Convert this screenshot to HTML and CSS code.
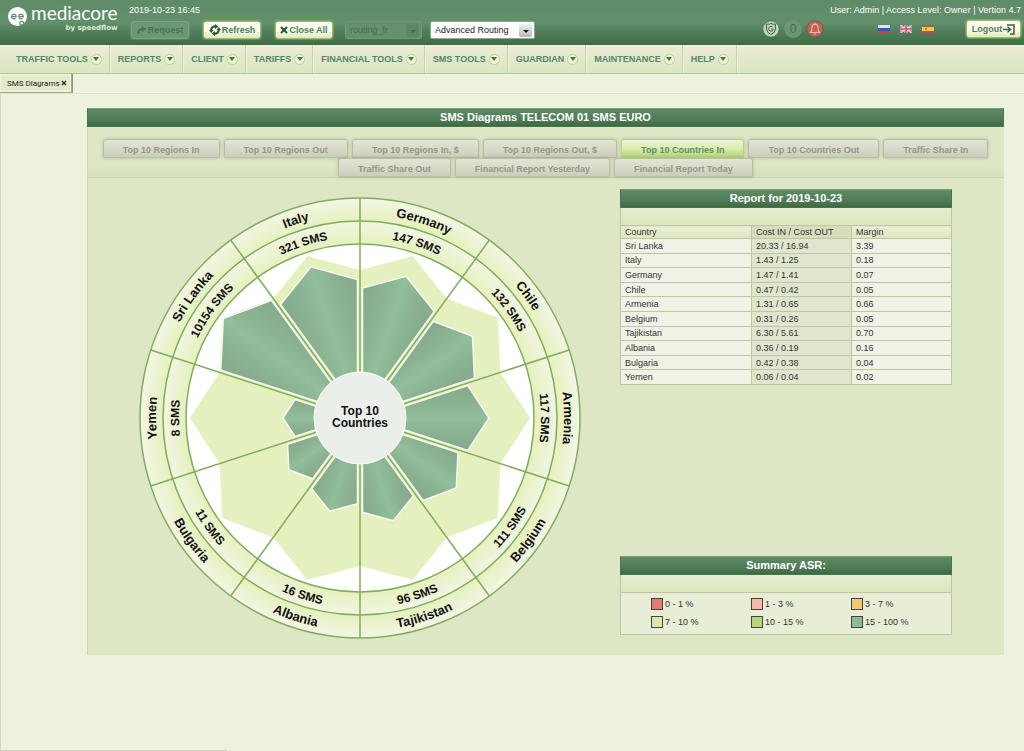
FILE: index.html
```html
<!DOCTYPE html>
<html lang="en">
<head>
    <meta charset="UTF-8">
    <meta name="viewport" content="width=device-width, initial-scale=1.0">
    <title>SMS Diagrams</title>
    <link rel="stylesheet" href="styles.css">
</head>
<body>
<header class="header">
    <a class="logo" href="#">
        <svg class="logo-mark" viewBox="0 0 20 20" width="20" height="20">
            <circle cx="9.5" cy="9.5" r="9.5" fill="#fff"/>
            <g fill="none" stroke="#5d8b67" stroke-width="1.2">
                <path d="M4 9.6h4.2a2.3 2.3 0 1 0-.7 1.7"/>
                <path d="M11 9.6h4.4a2.3 2.3 0 1 0-.7 1.7"/>
                <circle cx="13.8" cy="16.2" r="1.9" fill="#fff"/>
            </g>
        </svg>
        <span class="logo-text">
            <span class="logo-name">mediacore</span>
            <span class="logo-sub">by speedflow</span>
        </span>
    </a>
    <div class="header-left">
        <div class="date">2019-10-23 16:45</div>
        <div class="controls">
            <div class="buttons">
                <button class="btn btn-off" disabled>
                    <svg viewBox="0 0 10 10" width="10" height="10"><path d="M1.5 9V6.5q0-2.5 3.5-2.5" fill="none" stroke="currentColor" stroke-width="2"/><path d="M5 1l4.5 3L5 7z" fill="currentColor"/></svg>Request
                </button>
                <button class="btn">
                    <svg viewBox="0 0 12 12" width="12" height="12"><g fill="none" stroke="#2f5a3b" stroke-width="2.2"><path d="M2.200 7V6a3.800 3.800 0 0 1 4.500-3.600"/><path d="M9.800 5v1a3.800 3.800 0 0 1-4.500 3.600"/></g><path d="M6 0l3.500 2.500L6 5zM6 7v5L2.500 9.500zM0 6h4.500L2.200 9zM7.500 6l2.300-3L12 6z" fill="#2f5a3b"/></svg>Refresh
                </button>
                <button class="btn">
                    <svg viewBox="0 0 8 8" width="8" height="8"><path d="M1 1l6 6M7 1L1 7" stroke="#2f4f3a" stroke-width="2"/></svg>Close All
                </button>
            </div>
            <div class="selects">
                <div class="select select-off">
                    <select aria-label="Routing server" disabled><option>routing_fr</option></select>
                    <span class="arrow"></span>
                </div>
                <div class="select select-wide">
                    <select aria-label="Routing mode"><option>Advanced Routing</option></select>
                    <span class="arrow"></span>
                </div>
            </div>
        </div>
    </div>
    <div class="header-right">
        <div class="user">User: Admin | Access Level: Owner | Vertion 4.7</div>
        <div class="tools">
            <div class="badges">
                <svg viewBox="0 0 18 18" width="18" height="18">
                    <circle cx="9" cy="9" r="8.300" fill="#c3d3bb" stroke="#44704d"/>
                    <path d="M9 3.200l1.500 1 3-.2v5q-.5 4-4.500 5.500-4-1.500-4.500-5.500V4l3 .2z" fill="none" stroke="#3c6547"/>
                    <path d="M11 7.400a2.400 2.400 0 1 0 .4 1.800H9.300" fill="none" stroke="#3c6547"/>
                </svg>
                <span class="count">0</span>
                <svg viewBox="0 0 18 18" width="18" height="18">
                    <circle cx="9" cy="9" r="8.300" fill="#c5615a" stroke="#4f6a4c"/>
                    <path d="M4.500 12.500q1.500-1.500 1.500-5Q6 4.500 9 4.200q3 .3 3 3.300 0 3.500 1.500 5zM9 2.800v1.400M8 14h2" fill="none" stroke="#eab5a2" stroke-width="1.200"/>
                </svg>
            </div>
            <div class="flags">
                <a href="#" aria-label="Russian"><svg viewBox="0 0 12 8" width="12" height="8"><path fill="#e4e9e6" d="M0 0h12v3H0z"/><path fill="#3c55ad" d="M0 3h12v3H0z"/><path fill="#c7444c" d="M0 6h12v2H0z"/></svg></a>
                <a href="#" aria-label="English"><svg viewBox="0 0 12 8" width="12" height="8"><path fill="#4a5fa8" d="M0 0h12v8H0z"/><path d="M0 0l12 8M12 0L0 8" stroke="#f4eeee" stroke-width="1.800"/><path d="M0 0l12 8M12 0L0 8" stroke="#d4626a" stroke-width=".6"/><path d="M6 0v8M0 4h12" stroke="#f8f4f4" stroke-width="3"/><path d="M6 0v8M0 4h12" stroke="#d24452" stroke-width="1.500"/></svg></a>
                <a href="#" aria-label="Spanish"><svg viewBox="0 0 12 8" width="12" height="8"><path fill="#c94a43" d="M0 0h12v8H0z"/><path fill="#e6cf4c" d="M0 2h12v4H0z"/><path fill="#b0793c" d="M3 3h2v2H3z"/></svg></a>
            </div>
            <button class="btn btn-logout">Logout
                <svg viewBox="0 0 12 11" width="12" height="11"><path d="M4 1h7v9H7M0 5.500h7M4.500 2.800L7.500 5.500l-3 2.700" fill="none" stroke="#3b6346" stroke-width="1.500"/></svg>
            </button>
        </div>
    </div>
</header>

<nav class="menu">
    <a href="#">TRAFFIC TOOLS<span class="drop"></span></a>
    <a href="#">REPORTS<span class="drop"></span></a>
    <a href="#">CLIENT<span class="drop"></span></a>
    <a href="#">TARIFFS<span class="drop"></span></a>
    <a href="#">FINANCIAL TOOLS<span class="drop"></span></a>
    <a href="#">SMS TOOLS<span class="drop"></span></a>
    <a href="#">GUARDIAN<span class="drop"></span></a>
    <a href="#">MAINTENANCE<span class="drop"></span></a>
    <a href="#">HELP<span class="drop"></span></a>
</nav>

<div class="windows">
    <div class="window-tab">
        <a href="#">SMS Diagrams</a>
        <button class="close" aria-label="Close tab"><svg viewBox="0 0 6 6" width="6" height="6"><path d="M1 1l4 4M5 1L1 5" stroke="#333" stroke-width="1.500"/></svg></button>
    </div>
</div>

<main class="panel">
    <h1 class="bar">SMS Diagrams TELECOM 01 SMS EURO</h1>
    <div class="tabs">
        <a href="#">Top 10 Regions In</a>
        <a href="#">Top 10 Regions Out</a>
        <a href="#">Top 10 Regions In, $</a>
        <a href="#">Top 10 Regions Out, $</a>
        <a href="#" class="active">Top 10 Countries In</a>
        <a href="#">Top 10 Countries Out</a>
        <a href="#">Traffic Share In</a>
        <a href="#">Traffic Share Out</a>
        <a href="#">Financial Report Yesterday</a>
        <a href="#">Financial Report Today</a>
    </div>

    <div class="content">
        <svg class="chart" id="chart" viewBox="-221 -221 442 442" width="442" height="442" role="img" aria-label="Top 10 Countries"></svg>

        <div class="side">
            <section class="box">
                <h2 class="bar">Report for 2019-10-23</h2>
                <div class="strip"></div>
                <table class="report">
                    <thead>
                        <tr><th class="c-name">Country</th><th class="cost">Cost IN / Cost OUT</th><th>Margin</th></tr>
                    </thead>
                    <tbody>
                        <tr><td>Sri Lanka</td><td class="cost">20.33 / 16.94</td><td>3.39</td></tr>
                        <tr><td>Italy</td><td class="cost">1.43 / 1.25</td><td>0.18</td></tr>
                        <tr><td>Germany</td><td class="cost">1.47 / 1.41</td><td>0.07</td></tr>
                        <tr><td>Chile</td><td class="cost">0.47 / 0.42</td><td>0.05</td></tr>
                        <tr><td>Armenia</td><td class="cost">1.31 / 0.65</td><td>0.66</td></tr>
                        <tr><td>Belgium</td><td class="cost">0.31 / 0.26</td><td>0.05</td></tr>
                        <tr><td>Tajikistan</td><td class="cost">6.30 / 5.61</td><td>0.70</td></tr>
                        <tr><td>Albania</td><td class="cost">0.36 / 0.19</td><td>0.16</td></tr>
                        <tr><td>Bulgaria</td><td class="cost">0.42 / 0.38</td><td>0.04</td></tr>
                        <tr><td>Yemen</td><td class="cost">0.06 / 0.04</td><td>0.02</td></tr>
                    </tbody>
                </table>
            </section>

            <section class="box">
                <h2 class="bar">Summary ASR:</h2>
                <div class="strip"></div>
                <ul class="legend">
                    <li><i class="asr-1"></i>0 - 1 %</li>
                    <li><i class="asr-3"></i>1 - 3 %</li>
                    <li><i class="asr-7"></i>3 - 7 %</li>
                    <li><i class="asr-10"></i>7 - 10 %</li>
                    <li><i class="asr-15"></i>10 - 15 %</li>
                    <li><i class="asr-100"></i>15 - 100 %</li>
                </ul>
            </section>
        </div>
    </div>
</main>
<div class="status-line"></div>

<script src="chart.js"></script>
</body>
</html>
```
FILE: styles.css
```css
* {
    box-sizing: border-box;
}
body {
    margin: 0;
    min-height: 100vh;
    background: #edf2dc;
    box-shadow: inset 1px 0 #d3dac3;
    font-family: "Liberation Sans", Arial, sans-serif;
    font-size: 9px;
    color: #333;
}
a {
    color: inherit;
    text-decoration: none;
}
svg {
    display: block;
    flex: none;
}

/* header */
.header {
    display: flex;
    height: 45px;
    padding: 4px 3px 0 8px;
    background: linear-gradient(#5f8c67, #628f6c 50%, #527f5a 70%, #3f6b45);
    color: #fff;
}
.logo {
    display: flex;
    gap: 3px;
    width: 121px;
}
.logo-mark {
    margin-top: 3px;
}
.logo-text {
    display: flex;
    flex-direction: column;
    align-items: flex-end;
    gap: 2px;
}
.logo-name {
    font-family: Lato, sans-serif;
    font-size: 19px;
    line-height: 18px;
}
.logo-sub {
    font-family: "DejaVu Sans", sans-serif;
    font-size: 7px;
    line-height: 8px;
    font-weight: bold;
    color: #dcebd8;
}
.date, .user {
    line-height: 12px;
}
.controls, .buttons, .selects, .tools, .badges, .flags {
    display: flex;
    align-items: center;
}
.controls {
    gap: 12px;
    margin: 5px 0 0 2px;
}
.buttons {
    gap: 14px;
}
.selects {
    gap: 8px;
}
.btn {
    display: flex;
    align-items: center;
    justify-content: center;
    gap: 1px;
    min-width: 58px;
    height: 18px;
    padding: 0 3px;
    border: 1px solid #9dbf6c;
    border-radius: 3px;
    background: linear-gradient(#fbfdf2, #f6f9e6 60%, #dfebba);
    box-shadow: 0 0 1px 1px rgba(150, 190, 100, 0.5);
    color: #537c5f;
    font: bold 9px "Liberation Sans", Arial, sans-serif;
    cursor: pointer;
}
.btn-off {
    border-color: #7da281;
    background: #6d9774;
    box-shadow: 0 0 1px 1px rgba(100, 145, 105, 0.6);
    color: #477552;
}
.btn-logout {
    min-width: 55px;
}
.select {
    position: relative;
    width: 77px;
}
.select-wide {
    width: 105px;
}
.select select {
    display: block;
    width: 100%;
    height: 18px;
    padding: 0 20px 0 4px;
    border: 1px solid #8bab8c;
    border-radius: 2px;
    background: #fff;
    color: #222;
    font: 9px "Liberation Sans", Arial, sans-serif;
    appearance: none;
}
.select-off select {
    border-color: #6f9976;
    background: #64906d;
    color: #426f4c;
    opacity: 1;
}
.arrow {
    position: absolute;
    top: 3px;
    right: 3px;
    width: 13px;
    height: 13px;
    border-radius: 2px;
    background: linear-gradient(#f2f2f0, #b4b8b2);
    pointer-events: none;
}
.arrow::after {
    content: "";
    position: absolute;
    top: 6px;
    left: 4px;
    border: 3px solid transparent;
    border-top-color: #222;
    border-bottom: 0;
}
.select-off .arrow {
    background: #5a8662;
}
.select-off .arrow::after {
    border-top-color: #3f6b48;
}
.header-right {
    display: flex;
    flex-direction: column;
    align-items: flex-end;
    margin-left: auto;
}
.tools {
    margin-top: 4px;
}
.badges {
    gap: 4px;
    margin-right: 54px;
}
.count {
    width: 18px;
    border-radius: 50%;
    background: #6d9774;
    color: #40704b;
    font-size: 12px;
    line-height: 18px;
    text-align: center;
}
.flags {
    gap: 10px;
    margin-right: 32px;
}

/* main menu */
.menu {
    display: flex;
    height: 29px;
    padding-left: 8px;
    border-bottom: 1px solid #abc98c;
    background: linear-gradient(#eeebd7, #dfe8c8 60%, #dbe6c2);
    color: #558764;
    font-weight: bold;
}
.menu a {
    display: flex;
    align-items: center;
    gap: 3px;
    padding: 0 7px 0 8px;
    border-right: 1px solid #bfd79b;
    box-shadow: 1px 0 #edf2dc;
    white-space: nowrap;
}
.drop {
    display: flex;
    align-items: center;
    justify-content: center;
    width: 11px;
    height: 11px;
    border: 1px solid #b9d684;
    border-radius: 50%;
    background: #eef4d6;
}
.drop::after {
    content: "";
    border: 3px solid transparent;
    border-top: 4px solid #457050;
    border-bottom: 0;
}

/* opened windows */
.windows {
    display: flex;
    height: 20px;
    border-bottom: 1px solid #dce4c8;
}
.window-tab {
    display: flex;
    align-items: center;
    padding: 0 3px 0 7px;
    border: solid #a3ab90;
    border-width: 0 1px 1px 0;
    background: #e3ebc9;
    box-shadow: inset 0 0 2px 1px #f3f6e6, 1px 0 #8d967d;
    color: #222;
    font: 8px Roboto, sans-serif;
}
.close {
    padding: 1px;
    border: 0;
    background: none;
    cursor: pointer;
}

/* panel */
.panel {
    margin: 14px 20px 20px 87px;
    background: #dde7c5;
    box-shadow: inset 1px 0 #cdd8b6;
}
.bar {
    margin: 0;
    height: 19px;
    border: 1px solid #497450;
    border-top-color: #7b9f7b;
    background: linear-gradient(#5e8a64, #4f7d57 60%, #3e6a43);
    color: #fff;
    font-size: 11px;
    line-height: 16px;
    text-align: center;
}
.tabs {
    display: flex;
    flex-wrap: wrap;
    justify-content: center;
    column-gap: 4px;
    padding: 12px 14px 0;
    border-bottom: 1px solid #c9d4b3;
    background: linear-gradient(transparent 80%, #d5dfbe);
}
.tabs a {
    height: 19px;
    padding: 0 19px;
    border: 1px solid #b9bfa5;
    border-radius: 3px 3px 0 0;
    background: linear-gradient(#e3e4d3, #d6d8c8 60%, #cbcdbb);
    box-shadow: 0 0 3px rgba(120, 130, 100, 0.5);
    color: #939787;
    font-weight: bold;
    line-height: 20px;
    white-space: nowrap;
}
.tabs .active {
    border-color: #b5d681;
    background: linear-gradient(#edf5cf, #dcebaf 50%, #b3d57a);
    color: #5a9062;
}
.content {
    display: flex;
    flex-wrap: wrap;
    justify-content: center;
    gap: 39px;
    padding: 11px 0 16px;
}
.chart {
    margin-top: 8px;
}
.chart text {
    font-weight: bold;
    fill: #111;
    text-anchor: middle;
}
.chart .country {
    font-size: 13px;
}
.chart .sms, .chart .title {
    font-size: 12px;
}
.side {
    display: flex;
    flex-direction: column;
    justify-content: space-between;
    width: 332px;
    margin-bottom: 4px;
}
.strip {
    height: 17px;
    border: solid #bcc79f;
    border-width: 0 1px;
    background: linear-gradient(#e6eccf, #dde6bd);
}
.report {
    width: 100%;
    height: 160px;
    border-collapse: collapse;
    table-layout: fixed;
    background: #f0f2e6;
}
.report th, .report td {
    padding: 0 4px;
    border: 1px solid #bcc6a3;
    font-weight: normal;
    line-height: 12px;
    text-align: left;
}
.report th {
    background: linear-gradient(#e9eed8, #dce6c0);
}
.report .c-name {
    width: 131px;
}
.report .cost {
    width: 100px;
    background: #e0e5ce;
}
.report th.cost {
    background: #d5ddbc;
}
.legend {
    display: grid;
    grid-template-columns: 100px 100px 100px;
    row-gap: 6px;
    margin: 0;
    padding: 5px 0 6px 30px;
    border: 1px solid #bcc6a3;
    background: #e8eed6;
    list-style: none;
}
.legend li {
    display: flex;
    align-items: center;
    gap: 2px;
}
.legend i {
    width: 12px;
    height: 12px;
    border: 1px solid #444;
}
.asr-1 { background: #e37c6f; }
.asr-3 { background: #f8b9ab; }
.asr-7 { background: #f4c873; }
.asr-10 { background: #dbe8ae; }
.asr-15 { background: #b9d47a; }
.asr-100 { background: #8fb993; }

.status-line {
    position: fixed;
    bottom: 0;
    left: 0;
    width: 227px;
    height: 1px;
    background: #ced5bf;
}
```
FILE: chart.js
```js
// angle = middle of the sector, size = length of its petal
const sectors = [
    {name: 'Germany', sms: 147, angle: 18, size: 149},
    {name: 'Chile', sms: 132, angle: 54, size: 139},
    {name: 'Armenia', sms: 117, angle: 90, size: 129},
    {name: 'Belgium', sms: 111, angle: 126, size: 119},
    {name: 'Tajikistan', sms: 96, angle: 162, size: 108},
    {name: 'Albania', sms: 16, angle: 198, size: 98},
    {name: 'Bulgaria', sms: 11, angle: 234, size: 88},
    {name: 'Yemen', sms: 8, angle: 270, size: 77},
    {name: 'Sri Lanka', sms: 10154, angle: 306, size: 169},
    {name: 'Italy', sms: 321, angle: 342, size: 159}
];

const SIN = Math.sin(Math.PI / 10);
const COS = Math.cos(Math.PI / 10);

// petal pointing up, inset is the distance to the sector lines
function petal(size, inset) {
    const side = size * 0.867;
    const t = inset / (size * SIN);
    const x = side * SIN * (1 - t);
    const y = -side * COS + t * (side * COS - size);
    return `0,${-inset / SIN} ${x},${y} 0,${-size} ${-x},${y}`;
}

function arc(id, r, flip) {
    return flip
        ? `<path id="${id}" d="M${-r} 0A${r} ${r} 0 0 0 ${r} 0"/>`
        : `<path id="${id}" d="M${-r} 0A${r} ${r} 0 0 1 ${r} 0"/>`;
}

function label(cls, text, path, angle) {
    return `<text class="${cls}" transform="rotate(${angle})"><textPath href="#${path}" startOffset="50%">${text}</textPath></text>`;
}

let svg = `<defs>
    <radialGradient id="ring" gradientUnits="userSpaceOnUse" cx="0" cy="0" r="220">
        <stop offset=".79" stop-color="#e5f1bc"/><stop offset=".89" stop-color="#f1f5e2"/>
        <stop offset=".895" stop-color="#e5f1bc"/><stop offset="1" stop-color="#f3f6e6"/>
    </radialGradient>
    <linearGradient id="petal">
        <stop offset="0" stop-color="#86a98a"/><stop offset=".25" stop-color="#8ab191"/>
        <stop offset=".5" stop-color="#92be9a"/>
        <stop offset=".75" stop-color="#8ab191"/><stop offset="1" stop-color="#86a98a"/>
    </linearGradient>
    ${arc('country', 204, false)}${arc('country-flip', 213, true)}
    ${arc('sms', 181, false)}${arc('sms-flip', 190, true)}
</defs>
<circle r="220" fill="url(#ring)"/>
<circle r="174" fill="#fff"/>`;

sectors.forEach(s => {
    svg += `<polygon points="${petal(170, 0)}" fill="#e5f0bf" stroke="#e5f0bf" stroke-width=".5" transform="rotate(${s.angle})"/>`;
});
sectors.forEach(s => {
    svg += `<polygon points="${petal(s.size, 2.5)}" fill="url(#petal)" stroke="#f7faf3" stroke-width="1.5" transform="rotate(${s.angle})"/>`;
});
svg += '<g fill="none" stroke="#7fae5c" stroke-width="1.5"><circle r="220"/><circle r="197"/><circle r="174"/>';
sectors.forEach(s => {
    svg += `<path d="M0 0V-220" transform="rotate(${s.angle - 18})"/>`;
});
svg += '</g>';

sectors.forEach(s => {
    const flip = s.angle > 100 && s.angle < 260;
    const turn = flip ? s.angle - 180 : s.angle;
    svg += label('country', s.name, flip ? 'country-flip' : 'country', turn);
    svg += label('sms', s.sms + ' SMS', flip ? 'sms-flip' : 'sms', turn);
});

svg += `<circle r="46" fill="#ebefea" stroke="#f8faf5"/>
<text class="title" y="-3">Top 10</text><text class="title" y="9">Countries</text>`;

document.getElementById('chart').innerHTML = svg;
```
